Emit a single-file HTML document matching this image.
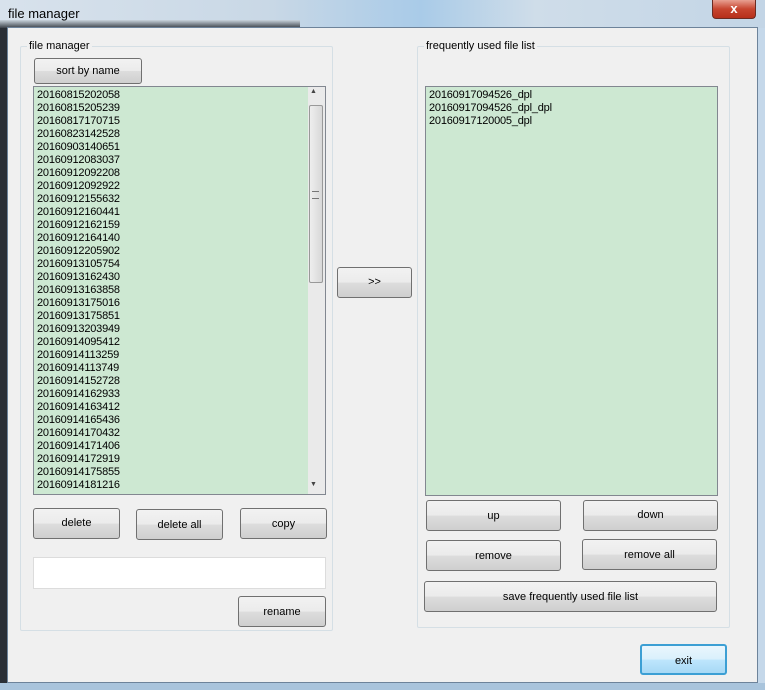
<!DOCTYPE html><html><head><style>
body{margin:0;width:765px;height:690px;overflow:hidden;background:#b9d0e4;font-family:"Liberation Sans",sans-serif;font-size:11px;position:relative}
.a{position:absolute}
.btn{position:absolute;border:1px solid #707070;border-radius:3px;background:linear-gradient(#f2f2f2 0%,#ebebeb 50%,#dddddd 51%,#cfcfcf 100%);text-align:center;color:#000;box-sizing:border-box}
.grp{position:absolute;border:1px solid #d5dfe5;border-radius:2px;box-sizing:border-box}
.lbl{position:absolute;background:#f0f0f0;padding:0 2px}
.list{position:absolute;background:#cde8d2;border:1px solid #828790;box-sizing:border-box;line-height:13px;padding:2px 3px;color:#000;letter-spacing:-0.2px}
</style></head><body>
<div class="a" style="left:0;top:0;width:765px;height:28px;background:linear-gradient(90deg,#d8e2ec 0,#c9d8e6 35%,#a9cbe8 55%,#cfdde9 70%,#c3d5e6 100%)"></div>
<div class="a" style="left:0;top:20px;width:300px;height:8px;background:linear-gradient(#c9d3dc,#3b4148)"></div>
<div class="a" style="left:8px;top:6px;font-size:13px;color:#000">file manager</div>
<div class="a" style="left:712px;top:0;width:44px;height:19px;border:1px solid #6b2b22;border-top:none;border-radius:0 0 4px 4px;background:linear-gradient(#e8a091,#c7452f 50%,#b62f1b);color:#fff;font-weight:bold;text-align:center;font-size:13px;line-height:18px;box-sizing:border-box">x</div>
<div class="a" style="left:0;top:28px;width:8px;height:662px;background:#2a2f36"></div>
<div class="a" style="left:757px;top:28px;width:8px;height:662px;background:#c5d8ea"></div>
<div class="a" style="left:0;top:683px;width:765px;height:7px;background:#a9c4dc"></div>
<div class="a" style="left:7px;top:27px;width:751px;height:656px;background:#f0f0f0;border:1px solid #6d839a;box-sizing:border-box"></div>

<div class="grp" style="left:20px;top:46px;width:313px;height:585px"></div>
<div class="lbl" style="left:27px;top:40px">file manager</div>
<div class="grp" style="left:417px;top:46px;width:313px;height:582px"></div>
<div class="lbl" style="left:424px;top:40px">frequently used file list</div>

<div class="btn" style="left:34px;top:58px;width:108px;height:26px;line-height:24px">sort by name</div>
<div class="list" style="left:33px;top:86px;width:293px;height:409px">20160815202058<br>20160815205239<br>20160817170715<br>20160823142528<br>20160903140651<br>20160912083037<br>20160912092208<br>20160912092922<br>20160912155632<br>20160912160441<br>20160912162159<br>20160912164140<br>20160912205902<br>20160913105754<br>20160913162430<br>20160913163858<br>20160913175016<br>20160913175851<br>20160913203949<br>20160914095412<br>20160914113259<br>20160914113749<br>20160914152728<br>20160914162933<br>20160914163412<br>20160914165436<br>20160914170432<br>20160914171406<br>20160914172919<br>20160914175855<br>20160914181216</div>
<div class="a" style="left:308px;top:87px;width:17px;height:407px;background:#eaeaea"></div>
<div class="a" style="left:310px;top:88px;font-size:7px;color:#444">▲</div>
<div class="a" style="left:310px;top:481px;font-size:7px;color:#444">▼</div>
<div class="a" style="left:309px;top:105px;width:14px;height:178px;border:1px solid #999;border-radius:2px;background:linear-gradient(90deg,#eee,#d8d8d8);box-sizing:border-box"></div>
<div class="a" style="left:312px;top:191px;width:7px;height:6px;border-top:1px solid #777;border-bottom:1px solid #777"></div>

<div class="list" style="left:425px;top:86px;width:293px;height:410px">20160917094526_dpl<br>20160917094526_dpl_dpl<br>20160917120005_dpl</div>

<div class="btn" style="left:337px;top:267px;width:75px;height:31px;line-height:29px">&gt;&gt;</div>
<div class="btn" style="left:33px;top:508px;width:87px;height:31px;line-height:29px">delete</div>
<div class="btn" style="left:136px;top:509px;width:87px;height:31px;line-height:31px">delete all</div>
<div class="btn" style="left:240px;top:508px;width:87px;height:31px;line-height:30px">copy</div>
<div class="a" style="left:33px;top:557px;width:293px;height:32px;background:#fff;border:1px solid #dcdcdc;box-sizing:border-box"></div>
<div class="btn" style="left:238px;top:596px;width:88px;height:31px;line-height:30px">rename</div>

<div class="btn" style="left:426px;top:500px;width:135px;height:31px;line-height:31px">up</div>
<div class="btn" style="left:583px;top:500px;width:135px;height:31px;line-height:29px">down</div>
<div class="btn" style="left:426px;top:540px;width:135px;height:31px;line-height:31px">remove</div>
<div class="btn" style="left:582px;top:539px;width:135px;height:31px;line-height:30px">remove all</div>
<div class="btn" style="left:424px;top:581px;width:293px;height:31px;line-height:31px">save frequently used file list</div>
<div class="btn" style="left:640px;top:644px;width:87px;height:31px;line-height:31px;border:2px solid #3c9fd4;background:linear-gradient(#eaf6fd,#d9f0fc 50%,#bee6fd 51%,#a7d9f5)">exit</div>
</body></html>
